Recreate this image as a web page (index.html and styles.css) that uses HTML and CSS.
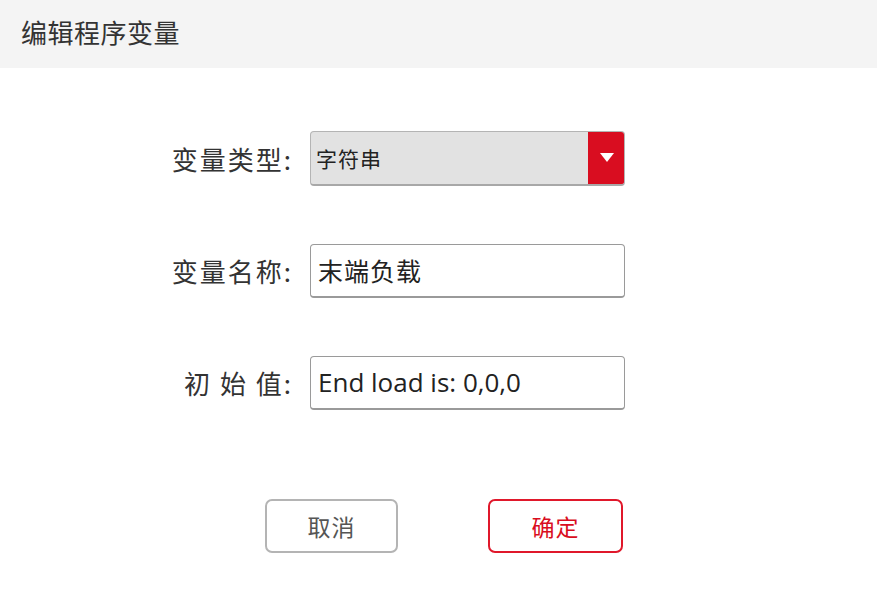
FILE: index.html
```html
<!DOCTYPE html>
<html lang="zh">
<head>
<meta charset="utf-8">
<link rel="stylesheet" href="styles.css">
</head>
<body>
<div class="header">编辑程序变量</div>
<div class="form">
  <div class="row">
    <div class="label">变量类型:</div>
    <div class="select">
      <span class="select-text">字符串</span>
      <span class="select-btn"><svg width="14" height="9" viewBox="0 0 14 9"><polygon points="0,0 14,0 7,9" fill="#fff"/></svg></span>
    </div>
  </div>
  <div class="row">
    <div class="label">变量名称:</div>
    <div class="input">末端负载</div>
  </div>
  <div class="row">
    <div class="label spaced">初 始 值:</div>
    <div class="input latin">End load is: 0,0,0</div>
  </div>
  <div class="buttons">
    <div class="btn cancel">取消</div>
    <div class="btn ok">确定</div>
  </div>
</div>
</body>
</html>
```

FILE: styles.css
```css
html, body {
  margin: 0;
  padding: 0;
  background: #fff;
  font-family: "Noto Sans CJK SC", "Noto Sans", sans-serif;
  color: #333;
}
.header {
  height: 68px;
  background: #f4f4f4;
  box-sizing: border-box;
  padding-left: 21px;
  font-size: 26px;
  line-height: 64px;
  letter-spacing: 0.5px;
  color: #333;
}
.form {
  padding-top: 63px;
  display: flex;
  flex-direction: column;
}
.row {
  display: flex;
  align-items: center;
  height: 55px;
  margin-bottom: 57px;
}
.label {
  width: 310px;
  text-align: right;
  font-size: 26px;
  letter-spacing: 2px;
  color: #333;
  padding-right: 17px;
  box-sizing: border-box;
}
.select {
  width: 315px;
  height: 55px;
  box-sizing: border-box;
  display: flex;
  align-items: stretch;
  background: #e2e2e2;
  border: 1px solid #b4b4b4;
  border-bottom: 2px solid #a8a8a8;
  border-radius: 4px;
  overflow: hidden;
}
.select-text {
  flex: 1;
  display: flex;
  align-items: center;
  padding-left: 5px;
  font-size: 21px;
  letter-spacing: 1px;
  color: #222;
}
.select-btn {
  width: 36px;
  background: #d90d20;
  display: flex;
  align-items: center;
  justify-content: center;
}
.select-btn svg {
  margin-left: 2px;
  margin-bottom: 2px;
}
.input {
  width: 315px;
  height: 54px;
  box-sizing: border-box;
  border: 1px solid #9a9a9a;
  border-bottom: 2px solid #9a9a9a;
  border-radius: 4px;
  display: flex;
  align-items: center;
  padding-left: 7px;
  font-size: 25px;
  letter-spacing: 1px;
  color: #222;
}
.input.latin {
  font-family: "Open Sans", "Noto Sans", sans-serif;
  font-size: 26px;
  letter-spacing: 0;
  padding-left: 7px;
}
.buttons {
  display: flex;
  margin-top: 32px;
  padding-left: 265px;
  gap: 90px;
}
.btn {
  width: 133px;
  height: 54px;
  box-sizing: border-box;
  border-radius: 7px;
  display: flex;
  align-items: center;
  justify-content: center;
  font-size: 23px;
  letter-spacing: 1px;
}
.cancel {
  border: 2px solid #b4b4b4;
  color: #555;
}
.ok {
  width: 135px;
  border: 2px solid #e0182b;
  color: #d90d20;
}
```
